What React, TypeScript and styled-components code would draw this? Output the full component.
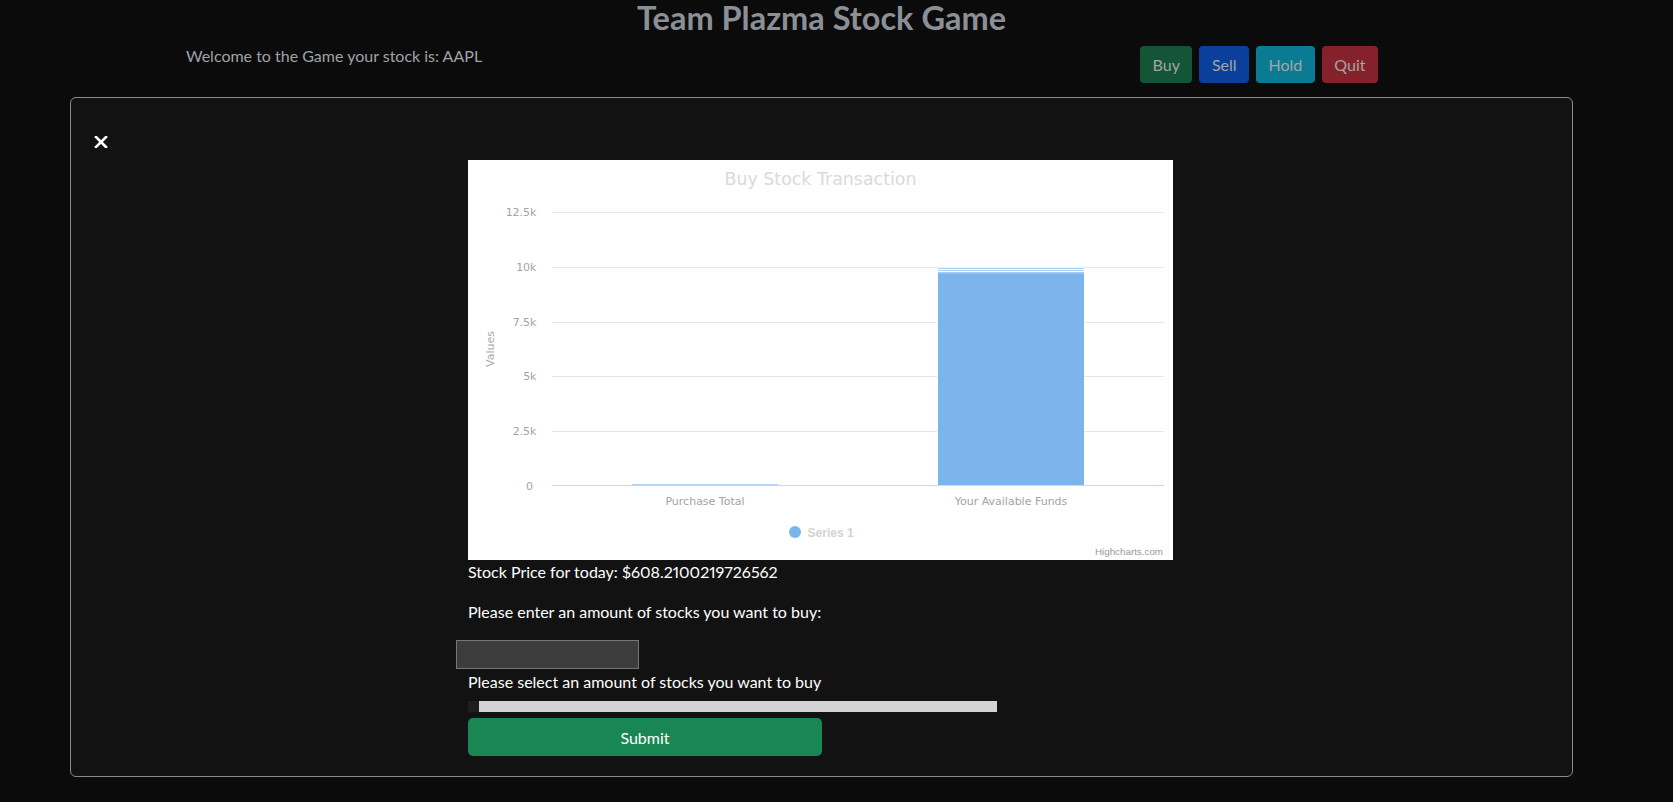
import React from 'react';
import styled, { createGlobalStyle } from 'styled-components';

const GlobalStyle = createGlobalStyle`
  html, body { margin: 0; padding: 0; background: #0b0b0b; }
  body { font-family: Lato, "Noto Sans", sans-serif; }
  * { box-sizing: border-box; }
`;

const Page = styled.div`
  width: 1643px;
  min-height: 802px;
`;

const Title = styled.h1`
  margin: 0;
  text-align: center;
  font-size: 32.5px;
  line-height: 36px;
  font-weight: 700;
  color: #8b9097;
`;

const TopRow = styled.div`
  display: flex;
  justify-content: space-between;
  align-items: flex-start;
  padding: 8px 265px 0 186px;
`;

const Welcome = styled.p`
  margin: 0;
  font-size: 16px;
  line-height: 24px;
  color: #9ea3a8;
`;

const ButtonGroup = styled.div`
  display: flex;
  gap: 7px;
  margin-top: 2px;
`;

const ActionButton = styled.button<{ $bg: string }>`
  height: 37px;
  padding: 0 12.5px;
  border: none;
  border-radius: 4px;
  background: ${(p) => p.$bg};
  color: #a4a4a4;
  font-family: inherit;
  font-size: 16px;
`;

const Modal = styled.div`
  margin: 14px 70px 0;
  border: 1px solid #8c8c8c;
  border-radius: 6px;
  background: #121212;
  padding: 38px 0 20px;
`;

const CloseButton = styled.button`
  display: block;
  margin-left: 23px;
  width: 14px;
  height: 12px;
  padding: 0;
  border: none;
  background: transparent;
  line-height: 0;
`;

const Body = styled.div`
  display: flex;
  flex-direction: column;
  align-items: flex-start;
  padding-left: 397px;
  margin-top: 12px;
`;

const ChartBox = styled.div`
  width: 705px;
  height: 400px;
  background: #ffffff;
`;

const InfoText = styled.p`
  margin: 0 0 16px;
  font-size: 16px;
  line-height: 24px;
  color: #ffffff;
  font-variant-numeric: proportional-nums;
`;

const AmountInput = styled.input`
  display: block;
  width: 183px;
  height: 29px;
  margin: 0 0 1px -12px;
  background: #3c3c3c;
  border: 1px solid #767676;
  color: #fff;
`;

const SliderLabel = styled.p`
  margin: 0;
  font-size: 16px;
  line-height: 24px;
  color: #ffffff;
`;

const Slider = styled.input`
  -webkit-appearance: none;
  appearance: none;
  display: block;
  width: 529px;
  height: 11px;
  margin: 7px 0 0;
  background: #d3d3d3;
  outline: none;
  &::-webkit-slider-thumb {
    -webkit-appearance: none;
    appearance: none;
    width: 11px;
    height: 11px;
    background: #1e1e1e;
    border: none;
    border-radius: 0;
  }
`;

const SubmitButton = styled.button`
  width: 354px;
  height: 38px;
  margin-top: 6px;
  border: none;
  border-radius: 5px;
  background: #198754;
  color: #ffffff;
  font-family: inherit;
  font-size: 16px;
`;

const chartFont = '"DejaVu Sans", "Liberation Sans", sans-serif';
const narrowFont = '"Liberation Sans", Arial, sans-serif';
const grid = [52, 107, 162, 216, 271];
const yLabels = ['12.5k', '10k', '7.5k', '5k', '2.5k'];

const Chart = () => (
  <svg width="705" height="400" viewBox="0 0 705 400" fontFamily={chartFont}>
    <text x="352.5" y="24.5" textAnchor="middle" fontSize="17.4" fill="#dadada">
      Buy Stock Transaction
    </text>
    {grid.map((g, i) => (
      <g key={g}>
        <line x1="84" x2="696" y1={g + 0.5} y2={g + 0.5} stroke="#e6e6e6" strokeWidth="1" />
        <text x="68.5" y={g + 4} textAnchor="end" fontSize="11" fill="#a3a3a3">
          {yLabels[i]}
        </text>
      </g>
    ))}
    <text x="65" y="329.5" textAnchor="end" fontSize="11" fill="#a3a3a3">0</text>
    <text
      x="26"
      y="189"
      textAnchor="middle"
      fontSize="11"
      fill="#a8a8a8"
      transform="rotate(-90 26 189)"
    >
      Values
    </text>
    <rect x="164" y="324" width="146" height="1.5" fill="#b3d3f4" />
    <rect x="469.5" y="107.5" width="147" height="218" fill="#ffffff" />
    <rect x="470" y="108" width="146" height="1" fill="#aacff3" />
    <rect x="470" y="110" width="146" height="1" fill="#aacff3" />
    <rect x="470" y="112" width="146" height="1.5" fill="#a3c9f0" />
    <rect x="470" y="113.3" width="146" height="212.2" fill="#7cb5ec" />
    <line x1="84" x2="696" y1="325.5" y2="325.5" stroke="#ccd6eb" strokeWidth="1" />
    <text x="237" y="344.5" textAnchor="middle" fontSize="11" fill="#a3a3a3">
      Purchase Total
    </text>
    <text x="543" y="344.5" textAnchor="middle" fontSize="11" fill="#a3a3a3">
      Your Available Funds
    </text>
    <circle cx="327" cy="372" r="6" fill="#7cb5ec" />
    <text x="339.6" y="376.5" fontSize="12" fontWeight="bold" fill="#d3d3d3" fontFamily={narrowFont}>
      Series 1
    </text>
    <text x="695" y="395" textAnchor="end" fontSize="9.8" fill="#999999" fontFamily={narrowFont}>
      Highcharts.com
    </text>
  </svg>
);

export default function App() {
  return (
    <Page>
      <GlobalStyle />
      <Title>Team Plazma Stock Game</Title>
      <TopRow>
        <Welcome>Welcome to the Game your stock is: AAPL</Welcome>
        <ButtonGroup>
          <ActionButton $bg="#135536">Buy</ActionButton>
          <ActionButton $bg="#0a409c">Sell</ActionButton>
          <ActionButton $bg="#0b7b93">Hold</ActionButton>
          <ActionButton $bg="#84212b">Quit</ActionButton>
        </ButtonGroup>
      </TopRow>
      <Modal>
        <CloseButton aria-label="close">
          <svg width="14" height="12" viewBox="0 0 14 12">
            <path d="M2 1 L12 11 M12 1 L2 11" stroke="#ffffff" strokeWidth="2.6" strokeLinecap="square" />
          </svg>
        </CloseButton>
        <Body>
          <ChartBox>
            <Chart />
          </ChartBox>
          <InfoText>Stock Price for today: $608.2100219726562</InfoText>
          <InfoText>Please enter an amount of stocks you want to buy:</InfoText>
          <AmountInput type="text" />
          <SliderLabel>Please select an amount of stocks you want to buy</SliderLabel>
          <Slider type="range" min={0} max={16} defaultValue={0} />
          <SubmitButton>Submit</SubmitButton>
        </Body>
      </Modal>
    </Page>
  );
}
